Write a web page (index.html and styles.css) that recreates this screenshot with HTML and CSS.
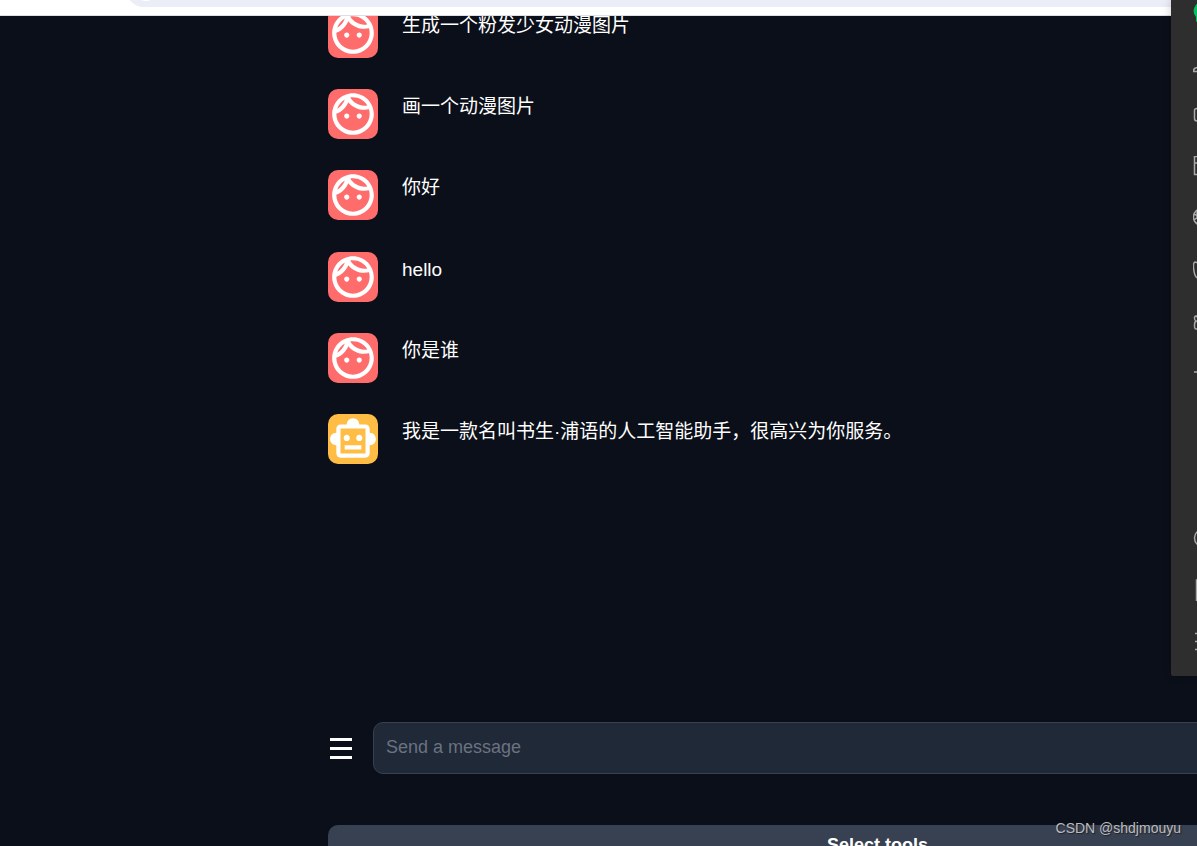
FILE: index.html
```
<!DOCTYPE html>
<html lang="zh-CN">

<head>
    <meta charset="UTF-8">
    <meta name="viewport" content="width=device-width, initial-scale=1.0">
    <title>Chat</title>
    <link rel="stylesheet" href="styles.css">
</head>

<body>
    <svg class="sprite" aria-hidden="true">
        <symbol id="icon-face" viewBox="0 0 24 24">
            <path d="M10.25 13c0 .69-.56 1.25-1.25 1.25S7.75 13.69 7.75 13s.56-1.25 1.25-1.25 1.25.56 1.25 1.25zM15 11.75c-.69 0-1.25.56-1.25 1.25s.56 1.25 1.25 1.25 1.25-.56 1.25-1.25-.56-1.25-1.25-1.25zm7 .25c0 5.52-4.48 10-10 10S2 17.52 2 12 6.48 2 12 2s10 4.48 10 10zM10.66 4.12C12.06 6.44 14.6 8 17.5 8c.46 0 .91-.05 1.34-.12C17.44 5.56 14.9 4 12 4c-.46 0-.91.05-1.34.12zM4.42 9.47c1.71-.97 3.03-2.55 3.66-4.44C6.37 6 5.05 7.58 4.42 9.47zM20 12c0-.78-.12-1.53-.33-2.24-.7.15-1.42.24-2.17.24-3.13 0-5.92-1.44-7.76-3.69C8.69 8.87 6.6 10.88 4 11.86c.01.04 0 .09 0 .14 0 4.41 3.59 8 8 8s8-3.59 8-8z"/>
        </symbol>
        <symbol id="icon-robot" viewBox="0 0 24 24">
            <path d="M20 9V7c0-1.1-.9-2-2-2h-3c0-1.66-1.34-3-3-3S9 3.34 9 5H6c-1.1 0-2 .9-2 2v2c-1.66 0-3 1.34-3 3s1.34 3 3 3v4c0 1.1.9 2 2 2h12c1.1 0 2-.9 2-2v-4c1.66 0 3-1.34 3-3s-1.34-3-3-3zm-2 10H6V7h12v12zm-9-6c-.83 0-1.5-.67-1.5-1.5S8.17 10 9 10s1.5.67 1.5 1.5S9.83 13 9 13zm7.5-1.5c0 .83-.67 1.5-1.5 1.5s-1.5-.67-1.5-1.5.67-1.5 1.5-1.5 1.5.67 1.5 1.5zM8 15h8v2H8v-2z"/>
        </symbol>
    </svg>

    <!-- Browser toolbar -->
    <header class="toolbar">
        <div class="address-bar"><span class="site-info"></span></div>
    </header>

    <main class="chat">
        <div class="messages-view">
            <ul class="messages">
                <li class="message">
                    <span class="avatar user"><svg><use href="#icon-face"/></svg></span>
                    <p>生成一个粉发少女动漫图片</p>
                </li>
                <li class="message">
                    <span class="avatar user"><svg><use href="#icon-face"/></svg></span>
                    <p>画一个动漫图片</p>
                </li>
                <li class="message">
                    <span class="avatar user"><svg><use href="#icon-face"/></svg></span>
                    <p>你好</p>
                </li>
                <li class="message">
                    <span class="avatar user"><svg><use href="#icon-face"/></svg></span>
                    <p>hello</p>
                </li>
                <li class="message">
                    <span class="avatar user"><svg><use href="#icon-face"/></svg></span>
                    <p>你是谁</p>
                </li>
                <li class="message">
                    <span class="avatar bot"><svg><use href="#icon-robot"/></svg></span>
                    <p>我是一款名叫书生·浦语的人工智能助手，很高兴为你服务。</p>
                </li>
            </ul>
        </div>

        <!-- Message input -->
        <form class="composer">
            <button type="button" class="menu-btn" aria-label="Menu">
                <svg viewBox="0 0 22 22"><path d="M0 1h22v3H0zM0 10h22v3H0zM0 19h22v3H0z"/></svg>
            </button>
            <input type="text" class="message-input" aria-label="Message" placeholder="Send a message">
        </form>

        <button type="button" class="tools-btn">Select tools</button>
    </main>

    <!-- Docked messenger window -->
    <nav class="dock" aria-label="Messenger">
        <div class="dock-group">
            <button type="button" class="dock-btn chats" aria-label="Chats">
                <svg viewBox="0 0 22 22"><path d="M9 2a9 9 0 0 0-6 15v5l4-3a9 9 0 1 0 2-17z"/></svg>
            </button>
            <button type="button" class="dock-btn" aria-label="Contacts">
                <svg viewBox="0 0 22 22"><path d="M8 11c2 1 1 3-1 3.500L2.500 16C1 16.500.5 17.500.5 19.500h16M8 11C4 7 6 1 11 1s7 6 3 10"/></svg>
            </button>
            <button type="button" class="dock-btn" aria-label="Favorites">
                <svg viewBox="0 0 22 22"><path d="M4.500 4.500 11 1l8 4v9l-8 4-7-1c-1.500 0-2.500-1-2.500-2.500V6.500c0-1 1-2 3-2l2 1"/></svg>
            </button>
            <button type="button" class="dock-btn" aria-label="Files">
                <svg viewBox="0 0 22 22"><path d="M1.500.5h19v18h-19zM1.500 7h19M8 7v12"/></svg>
            </button>
            <button type="button" class="dock-btn" aria-label="Moments">
                <svg viewBox="0 0 22 22"><circle cx="9" cy="9" r="8.500"/><path d="M1 6l7 4M4 2v9M1 12l8-6M3 15h9"/></svg>
            </button>
            <button type="button" class="dock-btn" aria-label="Channels">
                <svg viewBox="0 0 22 22"><path d="M10 14C8 6 5 2 2 2-1 3 1 18 5 18c2 0 3-2 5-6 2 4 3 6 5 6 4 0 6-15 3-16-3 0-6 4-8 12"/></svg>
            </button>
            <button type="button" class="dock-btn" aria-label="Top stories">
                <svg viewBox="0 0 22 22"><path d="M3 4c-2 0-2 4 0 5-2 1-2 8 0 8h15V4zM3 4l8 7M3 9l6 4"/></svg>
            </button>
            <button type="button" class="dock-btn" aria-label="Search">
                <svg viewBox="0 0 22 22"><path d="M1 8h20M11 8v12"/></svg>
            </button>
        </div>
        <div class="dock-group">
            <button type="button" class="dock-btn" aria-label="Mini programs">
                <svg viewBox="0 0 22 22"><circle cx="10" cy="11" r="8.500"/></svg>
            </button>
            <button type="button" class="dock-btn" aria-label="Phone">
                <svg viewBox="0 0 22 22"><path d="M3.500 1h14v21h-14z"/></svg>
            </button>
            <button type="button" class="dock-btn" aria-label="Settings">
                <svg viewBox="0 0 22 22"><path d="M2 2.500h18M2 10.500h18M2 18.500h18"/></svg>
            </button>
        </div>
    </nav>

    <div class="watermark">CSDN @shdjmouyu</div>
</body>

</html>
```
FILE: styles.css
```
* {
    margin: 0;
    padding: 0;
    box-sizing: border-box;
}

body {
    display: flex;
    flex-direction: column;
    height: 100vh;
    overflow: hidden;
    position: relative;
    background: #0b0f19;
    color: #fff;
    font-family: "Liberation Sans", "Noto Sans CJK SC", sans-serif;
    font-size: 19px;
}

button,
input {
    font-family: inherit;
    border: none;
}

button {
    background: none;
    color: inherit;
    cursor: pointer;
}

svg {
    display: block;
}

.sprite {
    display: none;
}

.toolbar {
    flex: none;
    display: flex;
    align-items: flex-end;
    height: 16px;
    padding: 0 0 8px 126px;
    background: #fff;
    border-bottom: 1px solid #dcdee2;
}

.address-bar {
    flex: 1;
    display: flex;
    align-items: center;
    height: 36px;
    padding-left: 8px;
    border-radius: 18px 0 0 18px;
    background: #ebeef7;
}

.site-info {
    width: 24px;
    height: 24px;
    border-radius: 50%;
    background: #fff;
}

/* The chat column runs on past the right edge of the window */
.chat {
    flex: 1;
    min-height: 0;
    display: flex;
    flex-direction: column;
    margin-right: -230px;
    padding-left: 328px;
}

.messages-view {
    flex: 1;
    min-height: 0;
    overflow: hidden;
}

.messages {
    display: flex;
    flex-direction: column;
    justify-content: space-between;
    min-height: 456px;
    margin-top: -8px;
    list-style: none;
}

.message {
    display: flex;
    gap: 24px;
}

.message p {
    line-height: 36px;
}

.avatar {
    flex: none;
    width: 50px;
    height: 50px;
    border-radius: 10px;
    overflow: hidden;
}

.avatar svg {
    width: 50px;
    height: 50px;
    fill: #fff;
}

.avatar.user {
    background: #ff6c6c;
}

.avatar.bot {
    background: #ffbd45;
}

.composer {
    display: flex;
    align-items: center;
    gap: 19px;
    margin-bottom: 51px;
}

.menu-btn {
    padding: 2px;
}

.menu-btn svg {
    width: 22px;
    height: 22px;
    fill: #fff;
    shape-rendering: crispEdges;
}

.message-input {
    flex: 1;
    height: 52px;
    padding: 0 12px 2px;
    border: 1px solid #374151;
    border-radius: 10px;
    background: #1f2937;
    color: #fff;
    font-size: 18px;
}

.message-input::placeholder {
    color: #6b7280;
    opacity: 1;
}

.message-input:focus {
    outline: none;
    border-color: #6b7280;
}

/* Taller than what is left of the window, so its lower part is cut off */
.tools-btn {
    flex: none;
    height: 40px;
    margin-bottom: -19px;
    border-radius: 10px;
    background: #374151;
    font-size: 18px;
    font-weight: bold;
}

.dock {
    position: absolute;
    top: 0;
    right: 0;
    display: flex;
    flex-direction: column;
    justify-content: space-between;
    width: 26px;
    height: 676px;
    padding-bottom: 8px;
    overflow: hidden;
    border-bottom-left-radius: 2px;
    background: #2e2e2e;
    box-shadow: 0 0 10px rgba(0, 0, 0, 0.2);
}

.dock-group:first-child {
    margin-top: -15px;
}

.dock-btn {
    display: flex;
    align-items: center;
    height: 52px;
    padding-left: 22px;
}

.dock-btn svg {
    width: 22px;
    height: 22px;
    fill: none;
    stroke: #aaa;
    stroke-width: 1.5;
}

.dock-btn.chats svg {
    fill: #07c160;
    stroke: none;
}

.watermark {
    position: absolute;
    right: 16px;
    bottom: 9px;
    color: #b9bbc0;
    font-size: 14px;
    line-height: 18px;
    text-shadow: 1px 1px 1px #222;
}
```
